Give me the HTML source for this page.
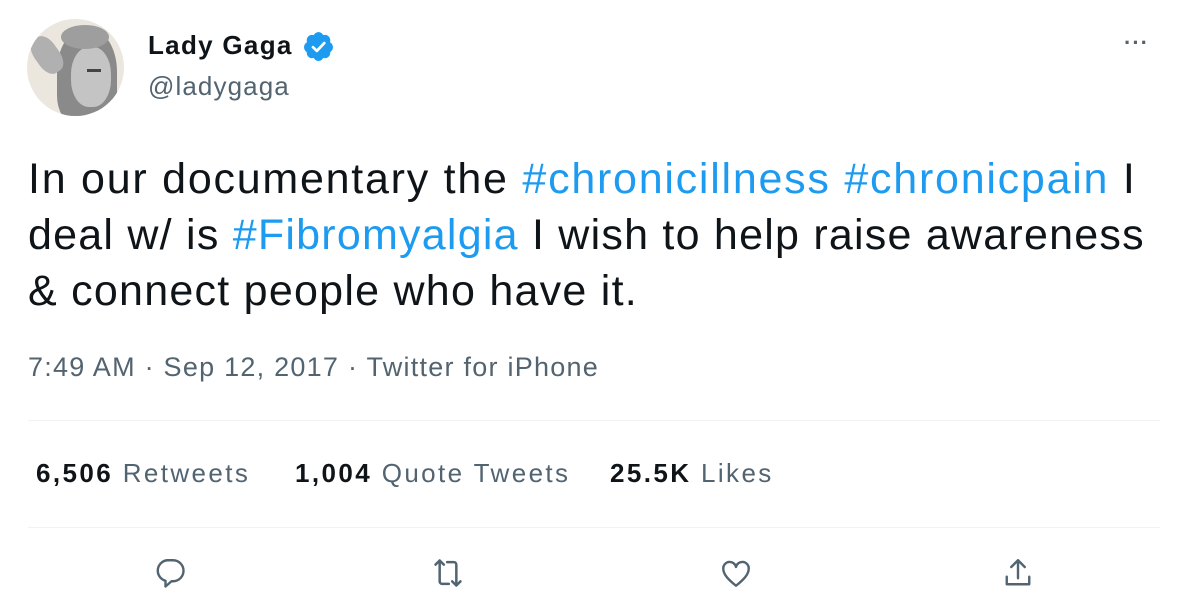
<!DOCTYPE html>
<html><head><style>
body{margin:0;width:1188px;height:616px;background:#fff;font-family:"Liberation Sans",Arial,sans-serif;color:#0f1419;position:relative;overflow:hidden}
.a{position:absolute;white-space:nowrap}
.blue{color:#1d9bf0}
.g{color:#536471}
.hr{position:absolute;left:28px;width:1132px;height:1px;background:#eff3f4}
.st{position:absolute;top:458px;font-size:26px;letter-spacing:2.4px;color:#536471;white-space:nowrap}
.st b{color:#0f1419}
.ln{position:absolute;left:28px;font-size:43px;letter-spacing:1.65px;white-space:nowrap;line-height:56px}
</style></head><body>
<div class="a" style="left:27px;top:19px;width:97px;height:97px;border-radius:50%;background:#ebe7df;overflow:hidden">
<div style="position:absolute;left:30px;top:10px;width:60px;height:95px;border-radius:45% 45% 30% 30%;background:#8a8a8a"></div>
<div style="position:absolute;left:44px;top:28px;width:40px;height:60px;border-radius:45%;background:#c4c4c4"></div>
<div style="position:absolute;left:34px;top:6px;width:48px;height:24px;border-radius:50%;background:#9e9e9e"></div>
<div style="position:absolute;left:8px;top:16px;width:24px;height:40px;border-radius:40%;background:#b0b0b0;transform:rotate(-35deg)"></div>
<div style="position:absolute;left:60px;top:50px;width:14px;height:3px;background:#444"></div>
</div>
<div class="a" style="left:148px;top:30px;font-size:26px;font-weight:bold;letter-spacing:1.3px">Lady Gaga</div>
<svg class="a" style="left:302px;top:30px" width="33" height="33" viewBox="0 0 24 24"><path fill="#1d9bf0" d="M22.5 12.5c0-1.58-.88-2.95-2.16-3.6.15-.44.23-.91.23-1.4 0-2.21-1.71-4-3.82-4-.47 0-.92.08-1.34.25C14.82 2.42 13.5 1.5 12 1.5s-2.82.92-3.41 2.25c-.42-.17-.87-.25-1.34-.25-2.11 0-3.82 1.79-3.82 4 0 .49.08.96.23 1.4C2.38 9.55 1.5 10.92 1.5 12.5c0 1.5.8 2.8 1.96 3.5-.02.17-.03.34-.03.5 0 2.21 1.71 4 3.82 4 .47 0 .92-.08 1.34-.25.59 1.33 1.91 2.25 3.41 2.25 1.5 0 2.82-.92 3.41-2.25.42.17.87.25 1.34.25 2.11 0 3.82-1.79 3.82-4 0-.16-.01-.33-.03-.5 1.16-.7 1.96-2 1.96-3.5z"/><path fill="none" stroke="#fff" stroke-width="2" stroke-linecap="round" stroke-linejoin="round" d="M8 12.5l2.8 2.7L16.2 9.5"/></svg>
<div class="a g" style="left:148px;top:71px;font-size:26px;letter-spacing:1.1px">@ladygaga</div>
<div class="a g" style="left:1124px;top:30px;font-size:22px;letter-spacing:1px;font-weight:bold">···</div>
<div class="ln" style="top:151px;letter-spacing:1.75px">In our documentary the <span class="blue">#chronicillness</span> <span class="blue">#chronicpain</span> I</div>
<div class="ln" style="top:207px;letter-spacing:1.23px">deal w/ is <span class="blue">#Fibromyalgia</span> I wish to help raise awareness</div>
<div class="ln" style="top:263px;letter-spacing:1.25px">&amp; connect people who have it.</div>
<div class="a g" style="left:28px;top:352px;font-size:27px;letter-spacing:1.25px">7:49 AM · Sep 12, 2017 · Twitter for iPhone</div>
<div class="hr" style="top:420px"></div>
<div class="st" style="left:36px"><b>6,506</b> Retweets</div>
<div class="st" style="left:295px"><b>1,004</b> Quote Tweets</div>
<div class="st" style="left:610px"><b>25.5K</b> Likes</div>
<div class="hr" style="top:527px"></div>
<svg class="a" style="left:152px;top:555px" width="36" height="36" viewBox="0 0 24 24"><path fill="none" stroke="#536471" stroke-width="1.6" stroke-linejoin="round" d="M10 3.5h4a7 7 0 0 1 0 14h-1l-4 3.5v-3.8A7 7 0 0 1 10 3.5z"/></svg>
<svg class="a" style="left:428px;top:553px" width="40" height="40" viewBox="0 0 24 24"><path fill="none" stroke="#536471" stroke-width="1.5" stroke-linecap="round" stroke-linejoin="round" d="M4.5 7L7 4.5 9.5 7M7 5v12a1.5 1.5 0 0 0 1.5 1.5h4M19.5 17L17 19.5 14.5 17M17 19V7a1.5 1.5 0 0 0-1.5-1.5h-4"/></svg>
<svg class="a" style="left:718px;top:555px" width="36" height="36" viewBox="0 0 24 24"><path fill="none" stroke="#536471" stroke-width="1.6" stroke-linejoin="round" d="M12 20.5C7 16.5 3.5 13 3.5 9a4.3 4.3 0 0 1 8.5-1 4.3 4.3 0 0 1 8.5 1c0 4-3.5 7.5-8.5 11.5z"/></svg>
<svg class="a" style="left:1000px;top:555px" width="36" height="36" viewBox="0 0 24 24"><path fill="none" stroke="#536471" stroke-width="1.6" stroke-linecap="round" stroke-linejoin="round" d="M12 3.5v12M7.5 8L12 3.5 16.5 8M4.5 14.5v5h15v-5"/></svg>
</body></html>
